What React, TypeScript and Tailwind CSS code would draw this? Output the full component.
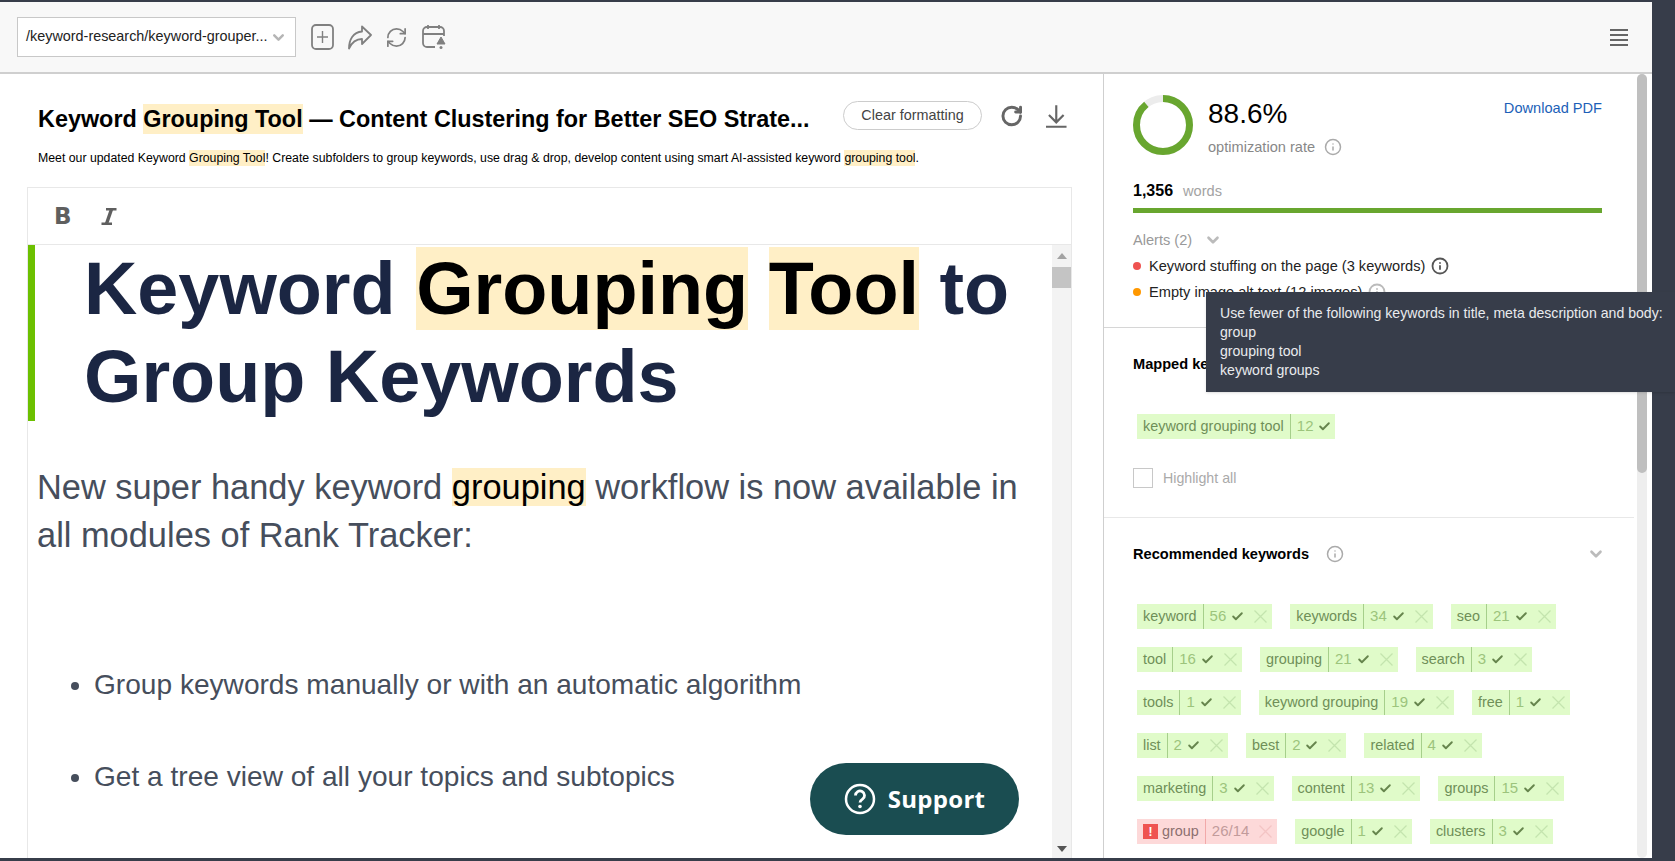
import { Check, Info, RefreshCw, RotateCw, ChevronDown } from "lucide-react";

const recommended = [
  { name: "keyword", count: "56" },
  { name: "keywords", count: "34" },
  { name: "seo", count: "21" },
  { name: "tool", count: "16" },
  { name: "grouping", count: "21" },
  { name: "search", count: "3" },
  { name: "tools", count: "1" },
  { name: "keyword grouping", count: "19" },
  { name: "free", count: "1" },
  { name: "list", count: "2" },
  { name: "best", count: "2" },
  { name: "related", count: "4" },
  { name: "marketing", count: "3" },
  { name: "content", count: "13" },
  { name: "groups", count: "15" },
  { name: "group", count: "26/14", over: true },
  { name: "google", count: "1" },
  { name: "clusters", count: "3" },
];

function Mark({ children, className = "" }: { children: React.ReactNode; className?: string }) {
  return <span className={`bg-[#ffefc6] ${className}`}>{children}</span>;
}

function Chip({
  name,
  count,
  over,
  noRemove,
}: {
  name: string;
  count: string;
  over?: boolean;
  noRemove?: boolean;
}) {
  return (
    <div
      className={`flex h-[25px] items-center text-[14.4px] ${
        over ? "bg-[#fdd9d9]" : "bg-[#e0fbc9]"
      } ${noRemove ? "" : "mr-[18px] mb-[18px]"}`}
    >
      <div
        className={`flex h-full items-center gap-[4px] px-[6px] ${
          over ? "border-r border-[#f2a9a9] text-[#8c6f6f]" : "border-r border-[#a6cf8b] text-[#6f8f58]"
        }`}
      >
        {over && (
          <span className="flex h-[15px] w-[15px] items-center justify-center bg-[#ef5350] text-[12px] leading-none font-bold text-white">
            !
          </span>
        )}
        {name}
      </div>
      <div className={`flex items-center pl-[6px] text-[15px] ${over ? "text-[#c29b9b]" : "text-[#9cc47c]"}`}>
        {count}
        {!over && <Check className="ml-[5px] h-[13px] w-[13px] text-[#66854d]" strokeWidth={3.5} />}
      </div>
      {noRemove ? (
        <div className="w-[4px]" />
      ) : (
        <svg
          className={`mr-[5px] ml-[10px] ${over ? "text-[#f3c4c4]" : "text-[#c4e4ae]"}`}
          width="13"
          height="13"
          viewBox="0 0 13 13"
          fill="none"
          stroke="currentColor"
          strokeWidth="1.3"
        >
          <path d="M.5.5l12 12M12.5.5l-12 12" />
        </svg>
      )}
    </div>
  );
}

function InfoIcon({ className, strokeWidth = 2 }: { className: string; strokeWidth?: number }) {
  return <Info className={className} strokeWidth={strokeWidth} />;
}

export default function App() {
  return (
    <div className="relative flex h-screen w-screen flex-col overflow-hidden bg-[#373d4a] pt-[2px] pr-[23px] pb-[3px] font-['Liberation_Sans',Arial,sans-serif]">
      {/* Topbar */}
      <header className="flex h-[72px] shrink-0 items-center border-b-2 border-[#cfcfcf] bg-[#f8f8f8] pl-[17px] pr-[24px]">
        <div className="flex h-[40px] w-[279px] items-center border border-[#c8c8c8] bg-white pl-[8px] text-[14.4px] whitespace-nowrap text-[#222]">
          /keyword-research/keyword-grouper...
          <ChevronDown className="ml-[2px] h-[17px] w-[17px] text-[#b5b5b5]" strokeWidth={3.5} />
        </div>
        <div className="ml-[15px] flex items-center gap-[13px] text-[#808080]">
          <svg width="23" height="26" viewBox="0 0 23 26" fill="none" stroke="currentColor" strokeWidth="1.8">
            <rect x="1" y="1" width="21" height="24" rx="4" />
            <path d="M11.5 7v12M6 13h11" strokeWidth="1.4" />
          </svg>
          <svg width="25" height="25" viewBox="0 0 25 25" fill="none" stroke="currentColor" strokeWidth="1.8" strokeLinejoin="round">
            <path d="M15 1.5 24 10l-9 9v-5c-6 0-10 3-13 9.5C2 15 6 7 15 6.5z" />
          </svg>
          <RefreshCw className="h-[23px] w-[23px]" strokeWidth={1.8} />
          <svg width="26" height="26" viewBox="0 0 26 26" fill="none" stroke="currentColor" strokeWidth="1.8">
            <path d="M14 23H6a4 4 0 0 1-4-4V7a4 4 0 0 1 4-4h13a4 4 0 0 1 4 4v5M2 10h21M7 1v4M18 1v4" />
            <path d="M20 13l4 7h-8z" fill="currentColor" strokeWidth="1" />
            <circle cx="20" cy="23.5" r="1.5" fill="currentColor" stroke="none" />
          </svg>
        </div>
        <div className="ml-auto flex w-[18px] flex-col gap-[3px]">
          <div className="h-[2px] bg-[#666]" />
          <div className="h-[2px] bg-[#666]" />
          <div className="h-[2px] bg-[#666]" />
          <div className="h-[2px] bg-[#666]" />
        </div>
      </header>

      <div className="flex min-h-0 flex-1 bg-white">
        {/* Editor column */}
        <main className="flex w-[1104px] shrink-0 flex-col border-r border-[#cfcfcf] pl-[27px]">
          <div className="mt-[27px] flex h-[36px] items-start pr-[36px]">
            <h1 className="ml-[11px] w-[805px] shrink-0 text-[23.4px] leading-[36px] font-bold whitespace-nowrap text-black">
              Keyword <Mark className="py-[2px]">Grouping Tool</Mark> — Content Clustering for Better SEO Strate...
            </h1>
            <button className="h-[29px] w-[139px] shrink-0 rounded-full border border-[#ccc] text-[14.4px] text-[#444]">
              Clear formatting
            </button>
            <RotateCw className="mt-[3px] ml-[18px] h-[24px] w-[24px] text-[#666]" strokeWidth={3} />
            <svg className="mt-[4px] ml-[23px] text-[#666]" width="21" height="23" viewBox="0 0 21 23" fill="none" stroke="currentColor" strokeWidth="2.2">
              <path d="M10.5 0v17M3 10l7.5 7.5L18 10M0 22h21" />
            </svg>
          </div>
          <p className="mt-[13px] ml-[11px] text-[12.3px] leading-[16px] whitespace-nowrap text-black">
            Meet our updated Keyword <Mark className="py-px">Grouping Tool</Mark>! Create subfolders to group keywords, use drag &amp; drop, develop
            content using smart AI-assisted keyword <Mark className="py-px">grouping tool</Mark>.
          </p>

          <section className="mt-[21px] flex min-h-0 w-[1045px] flex-1 flex-col border border-b-0 border-[#e8e8e8]">
            <div className="flex h-[57px] shrink-0 items-center gap-[29px] border-b border-[#e8e8e8] pl-[26px] text-[#5f5f5f]">
              <span className="text-[23px] leading-none font-bold font-['DejaVu_Sans',sans-serif]">B</span>
              <svg width="16" height="17" viewBox="0 0 16 17" fill="none" stroke="currentColor">
                <path d="M5 1.2h10.5M.5 15.8H11" strokeWidth="2.4" />
                <path d="M10.5 1.2 5.5 15.8" strokeWidth="3.4" />
              </svg>
            </div>
            <div className="flex min-h-0 flex-1">
              <div className="min-w-0 flex-1 overflow-hidden">
                <h2 className="border-l-[7px] border-[#6cc000] pl-[49px] text-[73.8px] leading-[88px] font-bold whitespace-nowrap text-[#1b2643]">
                  Keyword <Mark><span className="text-black">Grouping</span></Mark> <Mark><span className="text-black">Tool</span></Mark> to
                  <br />
                  Group Keywords
                </h2>
                <p className="mt-[42px] pl-[9px] text-[34.4px] leading-[48px] whitespace-nowrap text-[#464e5c]">
                  New super handy keyword <Mark><span className="text-black">grouping</span></Mark> workflow is now available in
                  <br />
                  all modules of Rank Tracker:
                </p>
                <ul className="mt-[106px] list-disc pl-[66px] text-[28.1px] leading-[40px] text-[#464e5c]">
                  <li className="mb-[52px]">Group keywords manually or with an automatic algorithm</li>
                  <li>Get a tree view of all your topics and subtopics</li>
                </ul>
              </div>
              {/* editor scrollbar */}
              <div className="flex w-[19px] shrink-0 flex-col items-center bg-[#f3f3f3]">
                <div className="mt-[8px] h-0 w-0 border-x-[5px] border-b-[6px] border-x-transparent border-b-[#a3a3a3]" />
                <div className="mt-[8px] h-[21px] w-full bg-[#c4c4c4]" />
                <div className="mt-auto mb-[6px] h-0 w-0 border-x-[5px] border-t-[6px] border-x-transparent border-t-[#555]" />
              </div>
            </div>
          </section>
        </main>

        {/* Side panel */}
        <aside className="flex min-w-0 flex-1">
          <div className="w-[530px] shrink-0 overflow-hidden">
            <div className="border-b border-[#d6d6d6] px-[29px] pt-[21px] pb-[25px]">
              <div className="flex items-start">
                <div className="h-[60px] w-[60px] shrink-0">
                  <svg width="60" height="60" viewBox="0 0 60 60" fill="none" strokeWidth="7">
                    <circle cx="30" cy="30" r="26.5" stroke="#ececec" />
                    <circle
                      cx="30"
                      cy="30"
                      r="26.5"
                      stroke="#68a62f"
                      strokeDasharray="147.5 166.5"
                      transform="rotate(-90 30 30)"
                    />
                  </svg>
                </div>
                <div className="ml-[15px]">
                  <div className="mt-[3px] text-[28px] leading-[31px] text-black">88.6%</div>
                  <div className="mt-[8px] flex items-center text-[14.6px] leading-[20px] text-[#888]">
                    optimization rate
                    <InfoIcon className="ml-[9px] h-[18px] w-[18px] text-[#aaa]" />
                  </div>
                </div>
                <a className="mt-[3px] mr-[3px] ml-auto text-[14.6px] text-[#1c5fb8]">Download PDF</a>
              </div>
              <div className="mt-[24px] flex items-center text-[14.6px] leading-[20px]">
                <span className="text-[16px] font-bold text-black">1,356</span>
                <span className="ml-[10px] text-[#a3a3a3]">words</span>
              </div>
              <div className="mt-[7px] h-[5px] w-[469px] bg-[#68a62f]" />
              <div className="mt-[17px] flex items-center text-[14.6px] leading-[20px] text-[#999]">
                Alerts (2)
                <ChevronDown className="ml-[12px] h-[18px] w-[18px] text-[#bbb]" strokeWidth={3.5} />
              </div>
              <div className="mt-[6px] flex items-center text-[14.6px] leading-[20px] text-[#222]">
                <span className="mr-[8px] h-[8px] w-[8px] rounded-full bg-[#ef5350]" />
                Keyword stuffing on the page (3 keywords)
                <InfoIcon className="ml-[6px] h-[18px] w-[18px] text-[#555]" strokeWidth={2.4} />
              </div>
              <div className="mt-[6px] flex items-center text-[14.6px] leading-[20px] text-[#222]">
                <span className="mr-[8px] h-[8px] w-[8px] rounded-full bg-[#ff9800]" />
                Empty image alt text (12 images)
                <InfoIcon className="ml-[6px] h-[18px] w-[18px] text-[#bbb]" strokeWidth={2.4} />
              </div>
            </div>

            <div className="border-b border-[#e8e8e8] px-[29px] pt-[26px] pb-[29px]">
              <div className="text-[14.6px] leading-[20px] font-bold text-black">Mapped keywords</div>
              <div className="mt-[40px] ml-[4px] flex">
                <Chip name="keyword grouping tool" count="12" noRemove />
              </div>
              <div className="mt-[29px] flex items-center text-[14.2px] leading-[20px] text-[#aaa]">
                <span className="h-[20px] w-[20px] border border-[#c8c8c8]" />
                <span className="ml-[10px]">Highlight all</span>
              </div>
            </div>

            <div className="pt-[26px] pl-[29px]">
              <div className="flex items-center pr-[29px] text-[14.6px] leading-[20px] font-bold text-black">
                Recommended keywords
                <InfoIcon className="ml-[17px] h-[18px] w-[18px] text-[#aaa]" />
                <ChevronDown className="ml-auto h-[18px] w-[18px] text-[#bbb]" strokeWidth={3.5} />
              </div>
              <div className="mt-[40px] ml-[4px] flex w-[470px] flex-wrap">
                {recommended.map((k) => (
                  <Chip key={k.name} name={k.name} count={k.count} over={k.over} />
                ))}
              </div>
            </div>
          </div>
          {/* panel scrollbar */}
          <div className="mr-[5px] ml-[3px] w-[10px] rounded-full bg-[#eeeeee]">
            <div className="h-[399px] rounded-full bg-[#bfbfbf]" />
          </div>
        </aside>
      </div>

      {/* Tooltip */}
      <div className="absolute top-[292px] right-0 left-[1206px] h-[100px] bg-[#373d4a] pt-[12px] pl-[14px] text-[14.1px] leading-[19px] whitespace-nowrap text-[#e9ebee] shadow-sm">
        Use fewer of the following keywords in title, meta description and body:
        <br />
        group
        <br />
        grouping tool
        <br />
        keyword groups
      </div>

      {/* Support */}
      <button className="absolute top-[763px] left-[810px] flex h-[72px] w-[209px] items-center justify-center gap-[12px] rounded-full bg-[#1a4d51] font-['Open_Sans',sans-serif] text-[24px] font-bold tracking-[0.3px] text-white">
        <svg width="32" height="32" viewBox="0 0 32 32" fill="none" stroke="currentColor" strokeWidth="2.5">
          <circle cx="16" cy="16" r="14" />
          <path d="M11.5 12.5a4.5 4.5 0 1 1 7 3.7c-1.5 1-2.5 1.7-2.5 3.3" strokeWidth="2.8" />
          <circle cx="16" cy="23.5" r="1.8" fill="currentColor" stroke="none" />
        </svg>
        Support
      </button>
    </div>
  );
}
